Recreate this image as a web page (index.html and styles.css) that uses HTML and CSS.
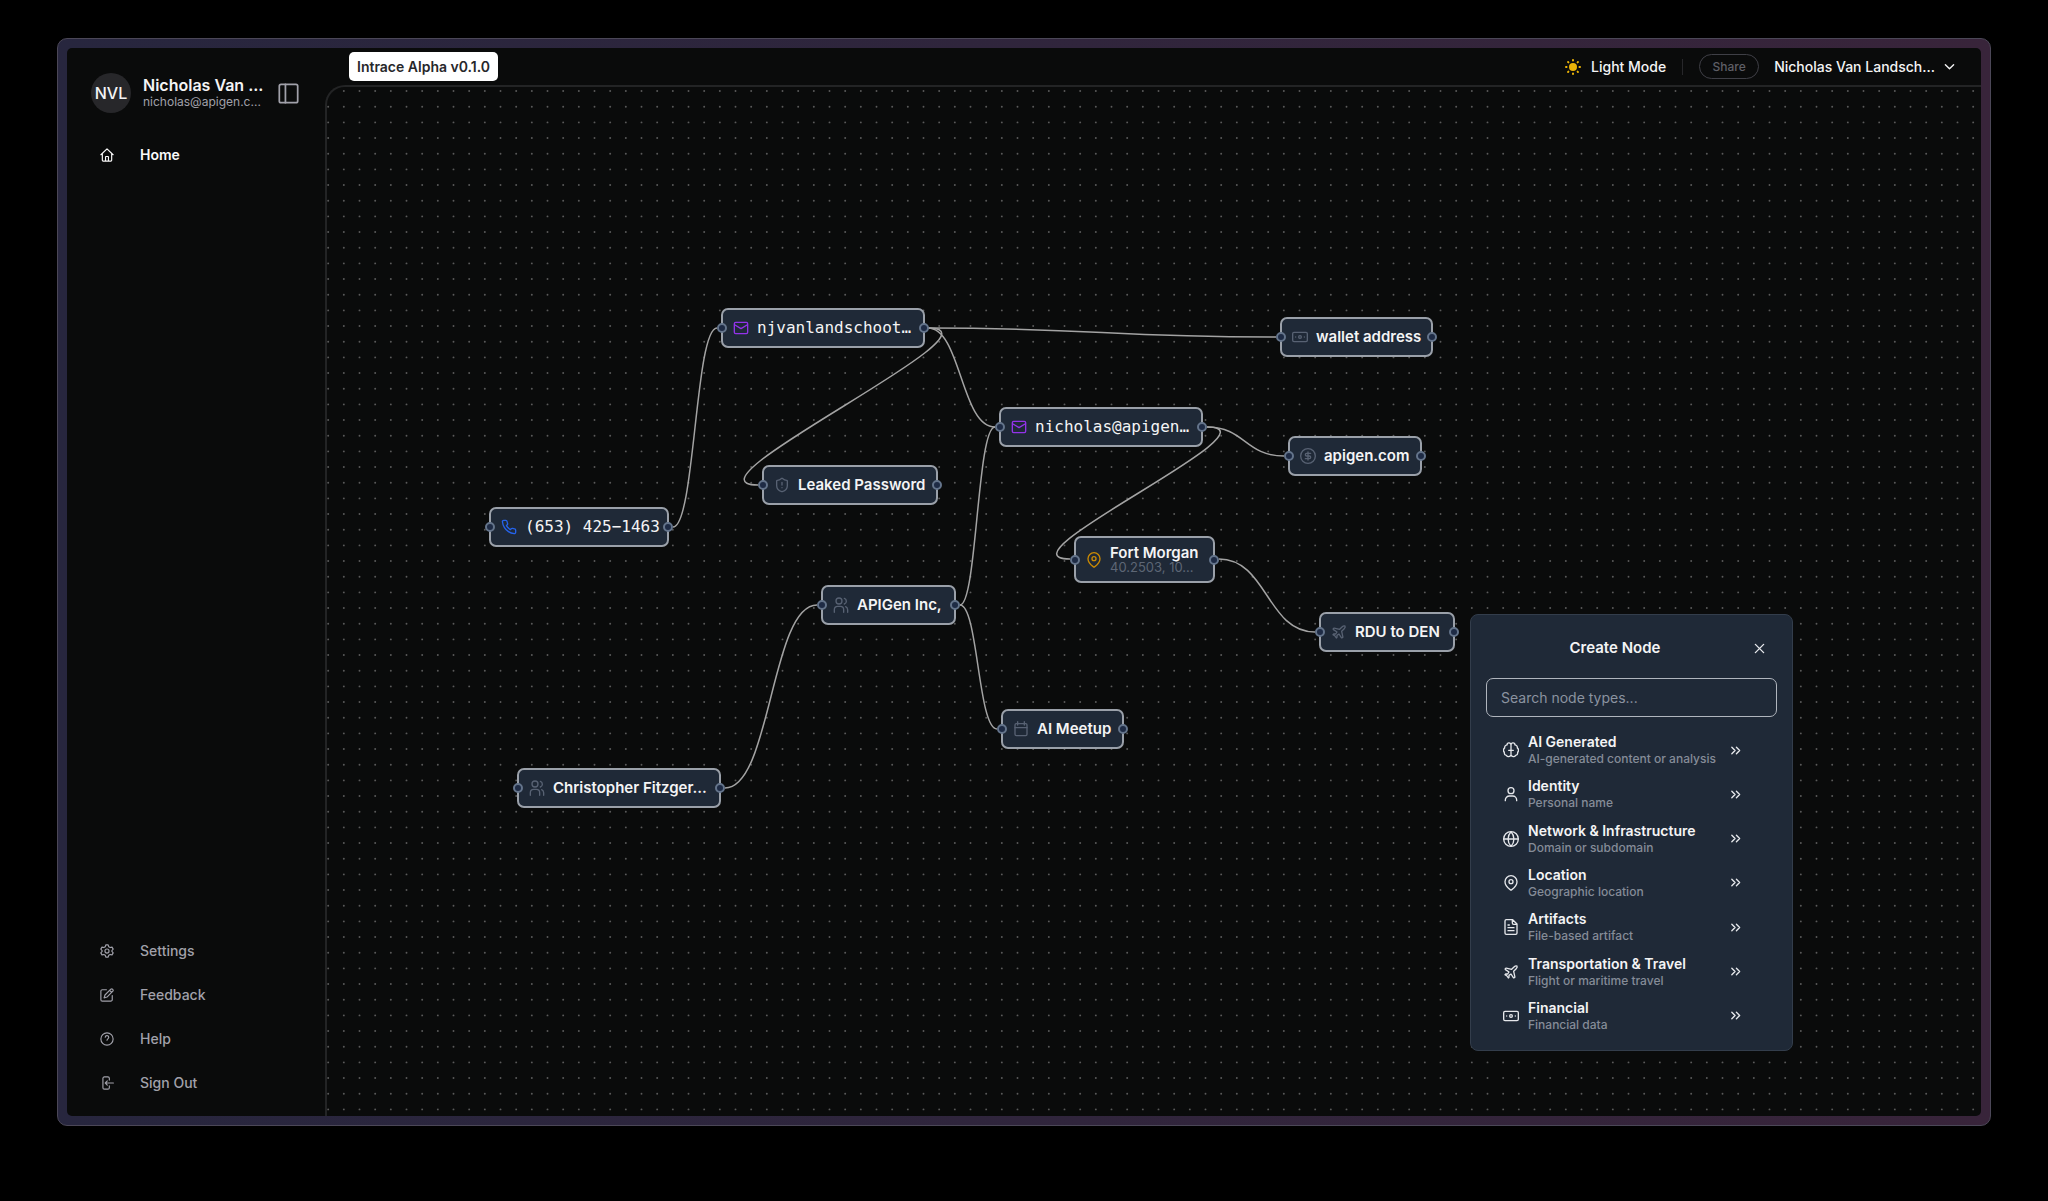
FILE: index.html
```html
<!DOCTYPE html>
<html lang="en">
<head>
<meta charset="utf-8">
<title>Intrace</title>
<link rel="stylesheet" href="styles.css">
</head>
<body>
<svg class="sprite" aria-hidden="true">
  <symbol id="i-mail" viewBox="0 0 24 24"><rect x="2" y="3.500" width="20" height="17" rx="2"/><path d="m3 7.500 9 5.500 9-5.500"/></symbol>
  <symbol id="i-phone" viewBox="0 0 24 24"><path d="M22 16.920v3a2 2 0 0 1-2.180 2 19.790 19.790 0 0 1-8.630-3.070 19.500 19.500 0 0 1-6-6 19.790 19.790 0 0 1-3.070-8.670A2 2 0 0 1 4.110 2h3a2 2 0 0 1 2 1.720c.13.96.36 1.900.7 2.810a2 2 0 0 1-.45 2.110L8.090 9.910a16 16 0 0 0 6 6l1.270-1.270a2 2 0 0 1 2.110-.45c.91.34 1.850.57 2.810.7A2 2 0 0 1 22 16.920z"/></symbol>
  <symbol id="i-shield" viewBox="0 0 24 24"><path d="M20 13c0 5-3.500 7.500-7.660 8.950a1 1 0 0 1-.67-.01C7.500 20.500 4 18 4 13V6a1 1 0 0 1 1-1c2 0 4.500-1.200 6.240-2.720a1.170 1.170 0 0 1 1.520 0C14.510 3.810 17 5 19 5a1 1 0 0 1 1 1zM12 8v4M12 16h.01"/></symbol>
  <symbol id="i-cash" viewBox="0 0 24 24"><rect x="1" y="5" width="22" height="14" rx="2"/><circle cx="12" cy="12" r="2"/><path d="M5.500 12h.01M18.500 12h.01"/></symbol>
  <symbol id="i-dollar" viewBox="0 0 24 24"><circle cx="12" cy="12" r="11"/><path d="M16 8h-6a2 2 0 1 0 0 4h4a2 2 0 1 1 0 4H8M12 18V6"/></symbol>
  <symbol id="i-pin" viewBox="0 0 24 24"><path d="M21 10c0 5.500-6 10.700-8.200 12.300a1.500 1.500 0 0 1-1.600 0C9 20.700 3 15.500 3 10a9 9 0 0 1 18 0"/><circle cx="12" cy="10" r="3"/></symbol>
  <symbol id="i-users" viewBox="0 0 24 24"><path d="M16 23v-4a5 5 0 0 0-5-5H7a5 5 0 0 0-5 5v4M22 23v-4a5 5 0 0 0-3-4.500M17 2a4.500 4.500 0 0 1 0 8.500"/><circle cx="9" cy="6" r="4.500"/></symbol>
  <symbol id="i-calendar" viewBox="0 0 24 24"><path d="M7 1v5M17 1v5M3 10h18"/><rect x="3" y="4" width="18" height="18" rx="2"/></symbol>
  <symbol id="i-plane" viewBox="0 0 24 24"><path d="M17.800 19.200 16 11l3.500-3.500C21 6 21.500 4 21 3c-1-.5-3 0-4.500 1.500L13 8 4.800 6.200c-.5-.1-.9.1-1.100.5l-.3.5c-.2.5-.1 1 .3 1.300L9 12l-2 3H4l-1 1 3 2 2 3 1-1v-3l3-2 3.500 5.300c.3.4.8.5 1.300.3l.5-.2c.4-.3.6-.7.5-1.200z"/></symbol>
  <symbol id="i-brain" viewBox="0 0 24 24"><path d="M12 4.500a3 3 0 0 0-6-.2 4 4 0 0 0-3.500 4.500A4.500 4.500 0 0 0 2 15.500a4 4 0 0 0 3 4.500 4 4 0 0 0 7-.5zM12 4.500a3 3 0 0 1 6-.2 4 4 0 0 1 3.500 4.500 4.500 4.500 0 0 1 .5 6.700 4 4 0 0 1-3 4.500 4 4 0 0 1-7-.5zM8.500 12.500h7"/></symbol>
  <symbol id="i-user" viewBox="0 0 24 24"><circle cx="12" cy="7" r="4.500"/><path d="M3.500 22v-1a6 6 0 0 1 6-6h5a6 6 0 0 1 6 6v1"/></symbol>
  <symbol id="i-globe" viewBox="0 0 24 24"><circle cx="12" cy="12" r="11"/><path d="M12 1a16 16 0 0 0 0 22 16 16 0 0 0 0-22M1 12h22"/></symbol>
  <symbol id="i-file" viewBox="0 0 24 24"><path d="M14.500 1H5a2 2 0 0 0-2 2v18a2 2 0 0 0 2 2h14a2 2 0 0 0 2-2V7.500zM14 1v5a2 2 0 0 0 2 2h5M9.500 9H7.500M16.500 13h-9M16.500 17.500h-9"/></symbol>
  <symbol id="i-chevrons" viewBox="0 0 24 24"><path d="m4 19 7-7-7-7M14 19l7-7-7-7"/></symbol>
  <symbol id="i-close" viewBox="0 0 24 24"><path d="M3 3l18 18M21 3 3 21"/></symbol>
  <symbol id="i-chevron" viewBox="0 0 24 24"><path d="m3 8 9 9 9-9"/></symbol>
  <symbol id="i-panel" viewBox="0 0 24 24"><rect x="1.500" y="1.500" width="21" height="21" rx="2"/><path d="M8.500 1.500v21"/></symbol>
  <symbol id="i-home" viewBox="0 0 24 24"><path d="M1.500 11.500 12 1.500l10.500 10M4 9.500V21a1.500 1.500 0 0 0 1.500 1.500h13A1.500 1.500 0 0 0 20 21V9.500M9.500 22v-6.500a1 1 0 0 1 1-1h3a1 1 0 0 1 1 1V22"/></symbol>
  <symbol id="i-gear" viewBox="0 0 24 24"><path d="M10 1.500h4l1 3.200 2.400 1.400 3.200-.8 2 3.500-2.200 2.400v1.600l2.200 2.400-2 3.500-3.200-.8L15 19.300l-1 3.200h-4l-1-3.200-2.400-1.400-3.200.8-2-3.500 2.200-2.400v-1.600L1.400 8.800l2-3.500 3.200.8L9 4.700z"/><circle cx="12" cy="12" r="3.500"/></symbol>
  <symbol id="i-edit" viewBox="0 0 24 24"><path d="M11 3H4a2.500 2.500 0 0 0-2.500 2.500V20A2.500 2.500 0 0 0 4 22.500h14.500A2.500 2.500 0 0 0 21 20v-7M18.500 2a2.500 2.500 0 0 1 3.500 3.500L12 15.500l-5 1.500 1.500-5zM16.500 4l3.500 3.500"/></symbol>
  <symbol id="i-help" viewBox="0 0 24 24"><circle cx="12" cy="12" r="10.500"/><path d="M9 9a3 3 0 0 1 6 .5c0 2-3 2.500-3 4.500"/></symbol>
  <symbol id="i-signout" viewBox="0 0 24 24"><path d="M16 7V4a2.500 2.500 0 0 0-2.500-2.500h-6A2.500 2.500 0 0 0 5 4v16a2.500 2.500 0 0 0 2.500 2.500h6A2.500 2.500 0 0 0 16 20v-3M23 12H9M12.500 8.500 9 12l3.500 3.500"/></symbol>
  <symbol id="i-sun" viewBox="0 0 24 24"><circle cx="12" cy="12" r="6" fill="currentColor" stroke="none"/><path stroke-width="3" d="M12 1.500v.8M12 21.700v.8M1.500 12h.8M21.700 12h.8M4.600 4.600l.5.500M18.900 18.900l.5.500M4.600 19.400l.5-.5M18.900 5.100l.5-.5"/></symbol>
</svg>

<div class="frame">
  <div class="app">
    <aside class="sidebar">
      <div class="profile">
        <span class="avatar">NVL</span>
        <div class="who"><span class="who-name">Nicholas Van ...</span><span class="who-mail">nicholas@apigen.c...</span></div>
        <button class="icon-btn" type="button" aria-label="Toggle sidebar"><svg class="icon icon-lg"><use href="#i-panel"/></svg></button>
      </div>
      <nav class="menu menu-top">
        <a class="active" href="#home"><svg class="icon icon-sm"><use href="#i-home"/></svg>Home</a>
      </nav>
      <nav class="menu">
        <a href="#settings"><svg class="icon icon-sm"><use href="#i-gear"/></svg>Settings</a>
        <a href="#feedback"><svg class="icon icon-sm"><use href="#i-edit"/></svg>Feedback</a>
        <a href="#help"><svg class="icon icon-sm"><use href="#i-help"/></svg>Help</a>
        <a href="#signout"><svg class="icon icon-sm"><use href="#i-signout"/></svg>Sign Out</a>
      </nav>
    </aside>

    <main class="main">
      <header class="topbar">
        <span class="version">Intrace Alpha v0.1.0</span>
        <button class="mode" type="button"><svg class="icon sun"><use href="#i-sun"/></svg>Light Mode</button>
        <span class="divider"></span>
        <button class="share" type="button" disabled>Share</button>
        <button class="account" type="button">Nicholas Van Landsch...<svg class="icon icon-xs"><use href="#i-chevron"/></svg></button>
      </header>

      <div class="canvas">
        <svg class="graph" aria-hidden="true">
          <defs>
            <pattern id="dots" patternUnits="userSpaceOnUse" x="9" y="-3" width="47" height="47" viewBox="0 0 60 60">
              <g class="dot">
                <circle cx="10" cy="9" r="1.2"/><circle cx="30" cy="9" r="1.2"/><circle cx="50" cy="9" r="1.2"/>
                <circle cx="10" cy="29" r="1.2"/><circle cx="30" cy="29" r="1.2"/><circle cx="50" cy="29" r="1.2"/>
                <circle cx="10" cy="49" r="1.2"/><circle cx="30" cy="49" r="1.2"/><circle cx="50" cy="49" r="1.2"/>
              </g>
            </pattern>
          </defs>
          <rect width="100%" height="100%" fill="url(#dots)"/>
          <g class="edges">
            <path d="M346 440C368 440 368 241 390 241"/>
            <path d="M601 241C775 241 775 250 949 250"/>
            <path d="M601 241C634 241 634 340 668 340"/>
            <path d="M601 241C686 241 346 398 431 398"/>
            <path d="M880 340C918 340 918 369 957 369"/>
            <path d="M880 340C958 340 665 472 743 472"/>
            <path d="M892 472C940 472 940 545 988 545"/>
            <path d="M633 518C650 518 650 340 668 340"/>
            <path d="M633 518C651 518 651 642 670 642"/>
            <path d="M398 701C444 701 444 518 490 518"/>
          </g>
        </svg>

        <div class="node mono" style="left:394px;top:221px;width:204px"><svg class="icon mail"><use href="#i-mail"/></svg><span>njvanlandschoot…</span></div>
        <div class="node" style="left:953px;top:230px;width:153px"><svg class="icon"><use href="#i-cash"/></svg><span>wallet address</span></div>
        <div class="node mono" style="left:672px;top:320px;width:204px"><svg class="icon mail"><use href="#i-mail"/></svg><span>nicholas@apigen…</span></div>
        <div class="node" style="left:961px;top:349px;width:134px"><svg class="icon"><use href="#i-dollar"/></svg><span>apigen.com</span></div>
        <div class="node" style="left:435px;top:378px;width:176px"><svg class="icon"><use href="#i-shield"/></svg><span>Leaked Password</span></div>
        <div class="node mono" style="left:162px;top:420px;width:180px"><svg class="icon phone"><use href="#i-phone"/></svg><span>(653) 425−1463</span></div>
        <div class="node tall" style="left:747px;top:449px;width:141px"><svg class="icon place"><use href="#i-pin"/></svg><span>Fort Morgan<small>40.2503, 10...</small></span></div>
        <div class="node" style="left:494px;top:498px;width:135px"><svg class="icon"><use href="#i-users"/></svg><span>APIGen Inc,</span></div>
        <div class="node" style="left:992px;top:525px;width:136px"><svg class="icon"><use href="#i-plane"/></svg><span>RDU to DEN</span></div>
        <div class="node" style="left:674px;top:622px;width:123px"><svg class="icon"><use href="#i-calendar"/></svg><span>AI Meetup</span></div>
        <div class="node" style="left:190px;top:681px;width:204px"><svg class="icon"><use href="#i-users"/></svg><span>Christopher Fitzger...</span></div>

        <section class="picker" style="left:1143px;top:527px">
          <div class="picker-head">
            <h2>Create Node</h2>
            <button class="icon-btn close" type="button" aria-label="Close"><svg class="icon icon-xs"><use href="#i-close"/></svg></button>
          </div>
          <input class="search" type="text" aria-label="Search node types" placeholder="Search node types...">
          <div class="types">
            <button type="button"><svg class="icon"><use href="#i-brain"/></svg><span class="type-text"><b>AI Generated</b><small>AI-generated content or analysis</small></span><svg class="icon icon-xs"><use href="#i-chevrons"/></svg></button>
            <button type="button"><svg class="icon"><use href="#i-user"/></svg><span class="type-text"><b>Identity</b><small>Personal name</small></span><svg class="icon icon-xs"><use href="#i-chevrons"/></svg></button>
            <button type="button"><svg class="icon"><use href="#i-globe"/></svg><span class="type-text"><b>Network &amp; Infrastructure</b><small>Domain or subdomain</small></span><svg class="icon icon-xs"><use href="#i-chevrons"/></svg></button>
            <button type="button"><svg class="icon"><use href="#i-pin"/></svg><span class="type-text"><b>Location</b><small>Geographic location</small></span><svg class="icon icon-xs"><use href="#i-chevrons"/></svg></button>
            <button type="button"><svg class="icon"><use href="#i-file"/></svg><span class="type-text"><b>Artifacts</b><small>File-based artifact</small></span><svg class="icon icon-xs"><use href="#i-chevrons"/></svg></button>
            <button type="button"><svg class="icon"><use href="#i-plane"/></svg><span class="type-text"><b>Transportation &amp; Travel</b><small>Flight or maritime travel</small></span><svg class="icon icon-xs"><use href="#i-chevrons"/></svg></button>
            <button type="button"><svg class="icon"><use href="#i-cash"/></svg><span class="type-text"><b>Financial</b><small>Financial data</small></span><svg class="icon icon-xs"><use href="#i-chevrons"/></svg></button>
          </div>
        </section>
      </div>
    </main>
  </div>
</div>
</body>
</html>
```
FILE: styles.css
```css
*, *::before, *::after { box-sizing: border-box; }

body {
  margin: 0;
  min-height: 100vh;
  display: flex;
  padding: 38px 57px 75px;
  background: #000;
  color: #f4f4f5;
  font: 500 14px/20px Inter, "Liberation Sans", sans-serif;
}

button, input { font: inherit; color: inherit; }
button { background: none; border: 0; padding: 0; cursor: pointer; }
a { color: inherit; text-decoration: none; }
.sprite { position: absolute; width: 0; height: 0; }

.icon {
  width: 16px;
  height: 16px;
  flex: none;
  fill: none;
  stroke: currentColor;
  stroke-width: 2;
  stroke-linecap: round;
  stroke-linejoin: round;
}
.icon-xs { width: 11px; height: 11px; stroke-width: 3; }
.icon-sm { width: 14px; height: 14px; }
.icon-lg { width: 21px; height: 21px; }
.icon-btn { display: flex; color: #a1a1aa; }

/* Window */
.frame {
  flex: 1;
  display: flex;
  padding: 9px;
  border: 1px solid #4b4757;
  border-radius: 10px;
  background: linear-gradient(90deg, #27263e, #38243a);
}
.app {
  flex: 1;
  display: flex;
  min-width: 0;
  border-radius: 5px;
  overflow: hidden;
  background: #0a0b0b;
}

/* Sidebar */
.sidebar {
  width: 258px;
  flex: none;
  display: flex;
  flex-direction: column;
  padding: 25px 24px 11px;
}
.profile { display: flex; align-items: center; height: 40px; }
.avatar {
  width: 40px;
  height: 40px;
  border-radius: 50%;
  display: grid;
  place-items: center;
  background: #27272a;
  font-size: 16px;
}
.who { display: flex; flex-direction: column; width: 135px; margin-left: 12px; white-space: nowrap; }
.who-name { font-size: 16px; font-weight: 600; line-height: 18px; }
.who-mail { font-size: 12px; font-weight: 400; line-height: 16px; color: #a1a1aa; }
.menu { display: grid; color: #a1a1aa; }
.menu-top { margin: 20px 0 auto; }
.menu a { display: flex; align-items: center; gap: 26px; height: 44px; padding-left: 9px; }
.menu .active { color: #fafafa; font-weight: 600; }

/* Top bar */
.main { flex: 1; min-width: 0; display: flex; flex-direction: column; }
.topbar { display: flex; align-items: center; height: 37px; padding: 0 26px 0 24px; }
.version {
  margin-right: auto;
  padding: 5px 8px 4px;
  border-radius: 5px;
  background: #fff;
  color: #27272a;
  font-weight: 600;
}
.mode { display: flex; align-items: center; gap: 10px; }
.sun { color: #eab308; }
.divider { width: 1px; height: 16px; margin: 0 16px; background: #27272a; }
.share {
  width: 60px;
  height: 25px;
  border: 1px solid #3f3f46;
  border-radius: 13px;
  color: #5f5f66;
  font-size: 12px;
}
.account { display: flex; align-items: center; gap: 9px; margin-left: 15px; }

/* Graph canvas */
.canvas {
  flex: 1;
  position: relative;
  overflow: hidden;
  border: 2px solid #232425;
  border-right: 0;
  border-bottom: 0;
  border-top-left-radius: 20px;
}
.graph { position: absolute; inset: 0; width: 100%; height: 100%; }
.dot { fill: #5a5a5a; }
.edges { fill: none; stroke: #a3a3a3; stroke-width: 1.5; }

.node {
  position: absolute;
  display: flex;
  align-items: center;
  gap: 8px;
  height: 40px;
  padding: 0 10px;
  border: 2px solid #9aa0a9;
  border-radius: 7px;
  background: #1f2937;
  font-size: 15px;
  font-weight: 600;
  line-height: 20px;
  white-space: nowrap;
}
/* Connection handles on both ends of a node */
.node::before, .node::after {
  content: "";
  position: absolute;
  top: calc(50% - 5px);
  width: 10px;
  height: 10px;
  border: 2px solid #64748b;
  border-radius: 50%;
  background: #1e2b45;
}
.node::before { left: -6px; }
.node::after { right: -6px; }
.node .icon { color: #586273; }
.node .mail { color: #9333ea; }
.node .phone { color: #2563eb; }
.node .place { color: #ca8a04; }
.mono { font-family: "DejaVu Sans Mono", "Liberation Mono", monospace; font-size: 16px; font-weight: 400; }
.tall { height: 47px; }
.tall span { line-height: 16px; }
.tall small { display: block; font-size: 13px; line-height: 13px; font-weight: 400; color: #5d6675; }

/* Create-node picker */
.picker {
  position: absolute;
  width: 323px;
  padding: 21px 15px 12px;
  border: 1px solid #333d4b;
  border-radius: 8px;
  background: #1f2937;
}
.picker-head {
  display: flex;
  align-items: center;
  justify-content: flex-end;
  height: 24px;
  margin-bottom: 18px;
  padding-right: 12px;
}
.picker h2 { flex: 1; margin: 0; padding-right: 10px; text-align: center; font-size: 15px; font-weight: 600; }
.close { color: #e5e7eb; }
.search {
  display: block;
  width: 100%;
  height: 39px;
  padding: 0 14px;
  border: 1px solid #b0b5bd;
  border-radius: 7px;
  background: transparent;
  font-weight: 400;
}
.search::placeholder { color: #8b93a0; opacity: 1; }
.types { display: grid; grid-auto-rows: 1fr; height: 310px; margin-top: 11px; padding: 0 36px 0 17px; }
.types button { display: flex; align-items: center; gap: 9px; text-align: left; white-space: nowrap; color: #e5e7eb; }
.type-text { flex: 1; display: grid; }
.type-text b { font-size: 14px; font-weight: 600; line-height: 18px; color: #f4f4f5; }
.type-text small { font-size: 12px; font-weight: 500; line-height: 16px; color: #858c98; }
```
